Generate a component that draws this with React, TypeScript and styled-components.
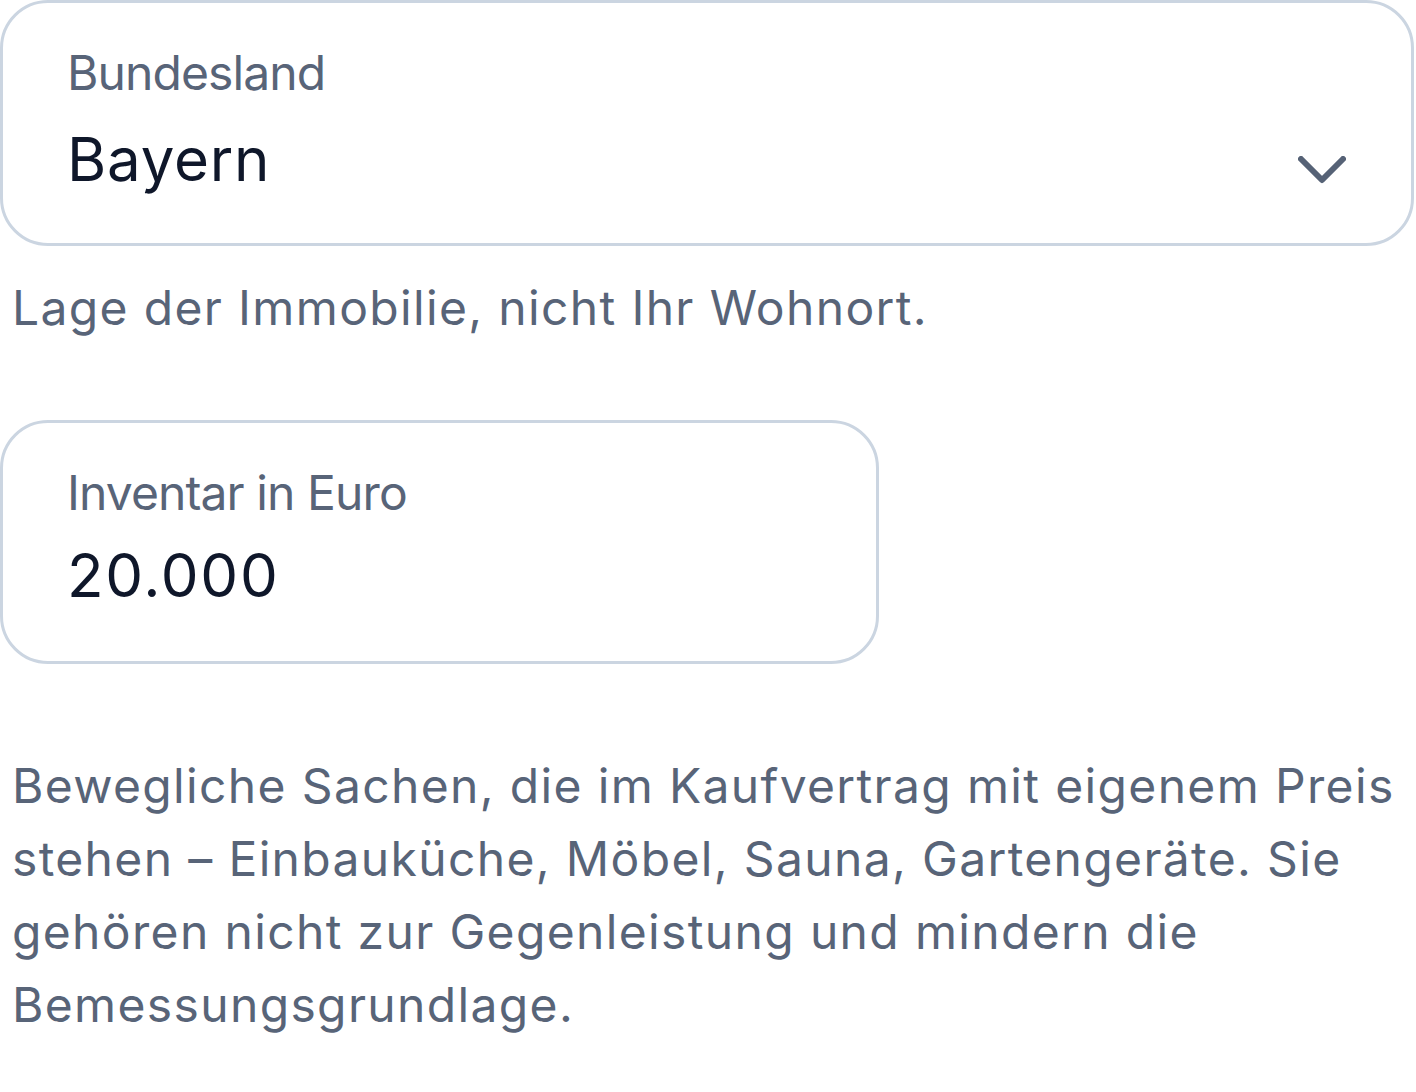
import React from "react";
import styled, { createGlobalStyle } from "styled-components";

const GlobalStyle = createGlobalStyle`
  html, body {
    margin: 0;
    padding: 0;
    background: #ffffff;
  }
  body {
    font-family: Inter, "Noto Sans", "Liberation Sans", sans-serif;
    -webkit-font-smoothing: antialiased;
  }
`;

const Page = styled.div`
  display: flex;
  flex-direction: column;
  align-items: flex-start;
  width: 1416px;
`;

const Field = styled.div<{ $width: number; $gap: number; $pb: number }>`
  box-sizing: border-box;
  width: ${(p) => p.$width}px;
  border: 3px solid #cbd5e1;
  border-radius: 48px;
  padding: 34px 65px ${(p) => p.$pb}px 64px;
  display: flex;
  flex-direction: column;
  gap: ${(p) => p.$gap}px;
  background: #ffffff;
`;

const Label = styled.div`
  font-size: 48px;
  line-height: 72px;
  letter-spacing: -0.9px;
  color: #586478;
`;

const ValueRow = styled.div`
  display: flex;
  justify-content: space-between;
  align-items: flex-end;
`;

const Value = styled.div<{ $ls: number }>`
  font-size: 60px;
  line-height: 84px;
  letter-spacing: ${(p) => p.$ls}px;
  color: #0f172a;
`;

const Chevron = styled.svg`
  display: block;
  width: 48px;
  height: 28px;
  margin-bottom: 17px;
  flex: none;
`;

const Hint = styled.p<{ $mt: number; $lh: number }>`
  margin: ${(p) => p.$mt}px 0 0 0;
  padding-left: 12px;
  font-size: 48px;
  line-height: ${(p) => p.$lh}px;
  letter-spacing: 1.35px;
  color: #586478;
`;

const Spacer = styled.div<{ $h: number }>`
  height: ${(p) => p.$h}px;
`;

export default function App() {
  return (
    <>
      <GlobalStyle />
      <Page>
        <Field $width={1414} $gap={8} $pb={42}>
          <Label>Bundesland</Label>
          <ValueRow>
            <Value $ls={0.8}>Bayern</Value>
            <Chevron viewBox="0 0 48 28" aria-hidden="true">
              <polyline
                points="3,3 24,24 45,3"
                fill="none"
                stroke="#566276"
                strokeWidth={6}
                strokeLinecap="round"
                strokeLinejoin="round"
              />
            </Chevron>
          </ValueRow>
        </Field>
        <Hint $mt={26} $lh={72}>Lage der Immobilie, nicht Ihr Wohnort.</Hint>
        <Spacer $h={76} />
        <Field $width={879} $gap={4} $pb={44}>
          <Label>Inventar in Euro</Label>
          <ValueRow>
            <Value $ls={1.7}>20.000</Value>
          </ValueRow>
        </Field>
        <Hint $mt={85} $lh={73}>
          Bewegliche Sachen, die im Kaufvertrag mit eigenem Preis stehen – Einbauküche, Möbel, Sauna,
          Gartengeräte. Sie gehören nicht zur Gegenleistung und mindern die Bemessungsgrundlage.
        </Hint>
      </Page>
    </>
  );
}
